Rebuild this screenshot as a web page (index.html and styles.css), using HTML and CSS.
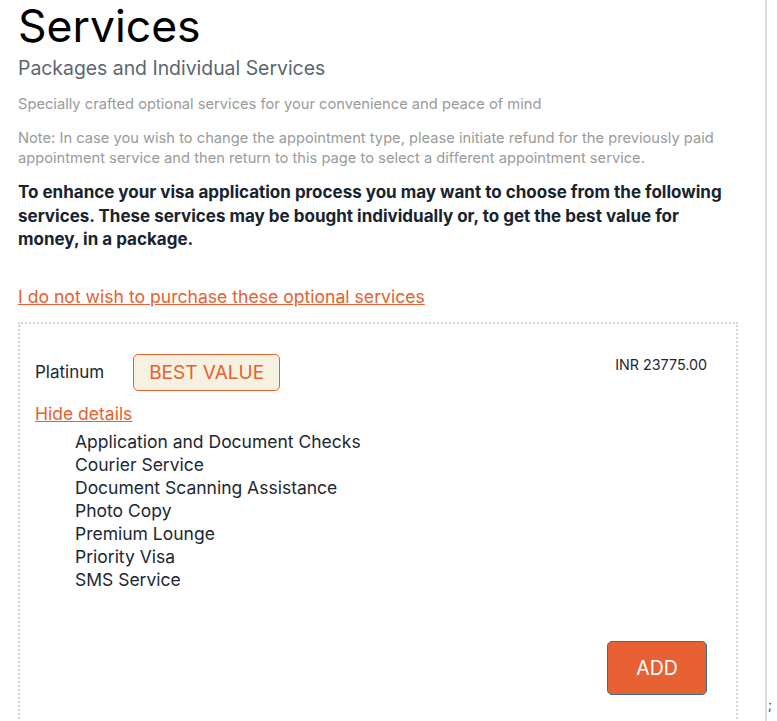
FILE: index.html
```html
<!DOCTYPE html>
<html lang="en">
<head>
    <meta charset="UTF-8">
    <meta name="viewport" content="width=device-width, initial-scale=1.0">
    <title>Services</title>
    <link rel="stylesheet" href="styles.css">
</head>
<body>

<div class="page">
    <h1 class="title">Services</h1>
    <h2 class="subtitle">Packages and Individual Services</h2>
    <p class="muted">Specially crafted optional services for your convenience and peace of mind</p>
    <p class="muted note">Note: In case you wish to change the appointment type, please initiate refund for the previously paid appointment service and then return to this page to select a different appointment service.</p>
    <p class="intro">To enhance your visa application process you may want to choose from the following services. These services may be bought individually or, to get the best value for money, in a package.</p>

    <a href="#" class="skip-link">I do not wish to purchase these optional services</a>

    <div class="package">
        <div class="package-head">
            <div class="package-name">
                <span>Platinum</span>
                <span class="badge">BEST VALUE</span>
            </div>
            <div class="price">INR 23775.00</div>
        </div>
        <a href="#" class="details-link">Hide details</a>
        <ul class="service-list">
            <li>Application and Document Checks</li>
            <li>Courier Service</li>
            <li>Document Scanning Assistance</li>
            <li>Photo Copy</li>
            <li>Premium Lounge</li>
            <li>Priority Visa</li>
            <li>SMS Service</li>
        </ul>
        <div class="package-actions">
            <button class="add-btn">ADD</button>
        </div>
    </div>
</div>
<span class="stray">;</span>

</body>
</html>
```

FILE: styles.css
```css
body {
    margin: 0;
    font-family: Inter, "Noto Sans", sans-serif;
    color: #1b2733;
    background: #fff;
    display: flex;
    height: 721px;
    overflow: hidden;
}

.page {
    width: 747px;
    padding: 0 0 0 18px;
    border-right: 2px solid #dcdcdc;
    flex-shrink: 0;
}

.title {
    font-size: 44.5px;
    font-weight: 400;
    line-height: 52px;
    margin: 0;
    color: #000;
}

.subtitle {
    font-size: 19.4px;
    font-weight: 400;
    color: #5b6670;
    margin: 3px 0 0;
    line-height: 26px;
}

.muted {
    font-size: 14.7px;
    color: #9a9a9a;
    line-height: 20px;
    margin: 13px 0 0;
}

.note {
    margin-top: 14px;
}

.intro {
    font-size: 17px;
    font-weight: 700;
    line-height: 23.5px;
    color: #17232f;
    margin: 13px 0 0;
    padding-right: 27px;
}

.skip-link {
    display: inline-block;
    margin-top: 34px;
    font-size: 17.6px;
    color: #e8602e;
    text-decoration: underline;
}

.package {
    margin-top: 15px;
    width: 720px;
    border: 2px dotted #d4d4d4;
    border-bottom: none;
    padding: 30px 29px 0 15px;
    box-sizing: border-box;
    height: 420px;
}

.package-head {
    display: flex;
    justify-content: space-between;
    align-items: flex-start;
}

.package-name {
    display: flex;
    align-items: center;
    gap: 29px;
    font-size: 17px;
}

.badge {
    font-size: 19px;
    color: #e8602e;
    background: #f7f1e2;
    border: 1px solid #e8602e;
    border-radius: 5px;
    padding: 6px 15px;
}

.price {
    font-size: 14.3px;
    margin-top: 2px;
}

.details-link {
    display: inline-block;
    margin-top: 12px;
    font-size: 17.5px;
    color: #e8602e;
}

.service-list {
    list-style: none;
    margin: 6px 0 0;
    padding-left: 40px;
    font-size: 17.5px;
    line-height: 23px;
}

.package-actions {
    display: flex;
    justify-content: flex-end;
    margin-top: 50px;
}

.add-btn {
    width: 100px;
    height: 54px;
    background: #e86132;
    color: #fff;
    border: 1px solid #3c6d92;
    border-radius: 5px;
    font-family: inherit;
    font-size: 19.5px;
    cursor: pointer;
}

.stray {
    align-self: flex-end;
    font-size: 13px;
    color: #1a3b6e;
    margin: 0 0 8px 1px;
}
```
